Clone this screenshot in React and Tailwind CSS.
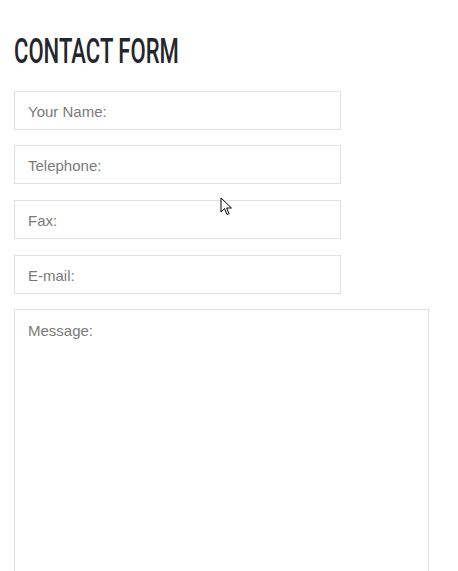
// App.jsx — contact form

const fields = [
  { label: "Your Name:", mt: "mt-0" },
  { label: "Telephone:", mt: "mt-[15px]" },
  { label: "Fax:", mt: "mt-[16px]" },
  { label: "E-mail:", mt: "mt-[16px]" },
];

function Cursor() {
  return (
    <svg
      className="absolute left-[220px] top-[197px]"
      width="14"
      height="20"
      viewBox="0 0 14 20"
    >
      <path
        d="M1 1 L1 15 L4.5 11.5 L7 17.5 L9 16.6 L6.6 11 L11.5 11 Z"
        fill="#fff"
        stroke="#000"
        strokeWidth="1"
        strokeLinejoin="miter"
      />
    </svg>
  );
}

export default function App() {
  return (
    <div className="relative h-[571px] w-[458px] overflow-hidden bg-white pl-[14px] pt-[34px] font-['Liberation_Sans',Arial,sans-serif]">
      <h1 className="h-[36px] origin-left scale-x-[0.63] whitespace-nowrap font-['Roboto',sans-serif] text-[35px] leading-[36px] font-medium text-[#23262d]">
        CONTACT FORM
      </h1>
      <div className="mt-[21px] flex flex-col">
        {fields.map((f) => (
          <div
            key={f.label}
            className={`${f.mt} flex h-[39px] w-[327px] items-center border border-[#e1e1e1] px-[13px] pt-[3px] text-[15px] text-[#7a7a7a]`}
          >
            {f.label}
          </div>
        ))}
        <div className="mt-[15px] h-[300px] w-[415px] border border-[#e1e1e1] px-[13px] pt-[10px] text-[15px] text-[#7a7a7a]">
          Message:
        </div>
      </div>
      <Cursor />
    </div>
  );
}
